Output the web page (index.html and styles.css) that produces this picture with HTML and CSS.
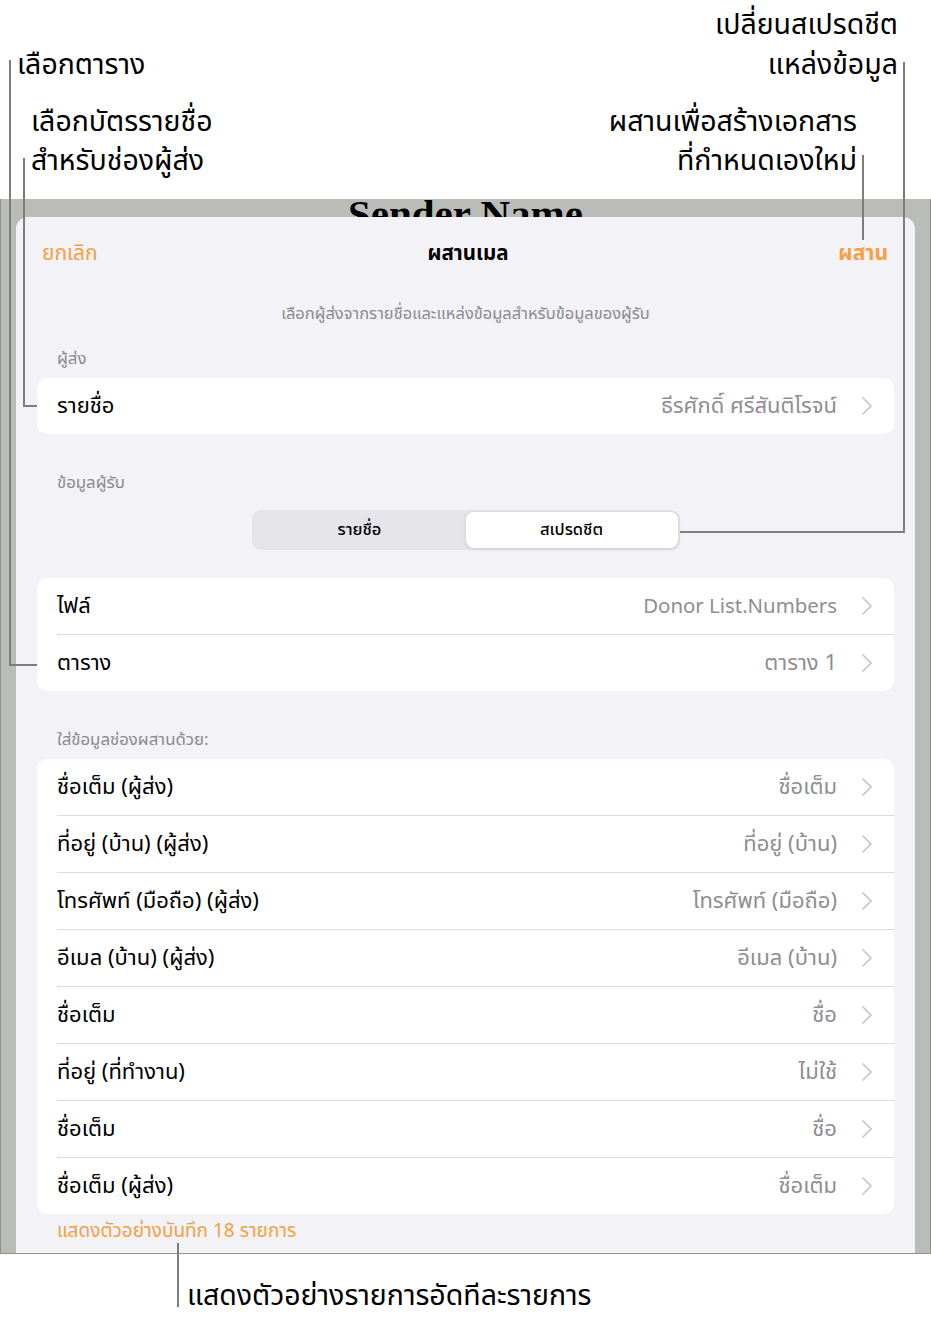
FILE: index.html
```html
<!DOCTYPE html>
<html lang="th">
<head>
  <meta charset="UTF-8">
  <meta name="viewport" content="width=device-width, initial-scale=1">
  <title>ผสานเมล</title>
  <link rel="stylesheet" href="styles.css">
</head>
<body>
  <div class="page">
    <!-- คำอธิบายด้านบน -->
    <div class="top-notes">
      <div class="notes-left">
        <div class="note note-table">เลือกตาราง</div>
        <div class="note note-card">เลือกบัตรรายชื่อ<br>สำหรับช่องผู้ส่ง</div>
      </div>
      <div class="notes-right">
        <div class="note note-source">เปลี่ยนสเปรดชีต<br>แหล่งข้อมูล</div>
        <div class="note note-merge">ผสานเพื่อสร้างเอกสาร<br>ที่กำหนดเองใหม่</div>
      </div>
    </div>

    <div class="frame">
      <div class="peek">Sender Name</div>
      <div class="sheet">
        <div class="nav">
          <span class="nav-btn">ยกเลิก</span>
          <span class="nav-title">ผสานเมล</span>
          <span class="nav-btn nav-done">ผสาน</span>
        </div>
        <p class="desc">เลือกผู้ส่งจากรายชื่อและแหล่งข้อมูลสำหรับข้อมูลของผู้รับ</p>

        <div class="sec-head">ผู้ส่ง</div>
        <div class="card">
          <div class="row"><span class="row-label">รายชื่อ</span><span class="row-value">ธีรศักดิ์ ศรีสันติโรจน์</span><svg class="chev" viewBox="0 0 12 20"><path d="M1.5 1.5 L10 10 L1.5 18.5"/></svg></div>
        </div>

        <div class="sec-head sec-gap">ข้อมูลผู้รับ</div>
        <div class="seg">
          <div class="seg-item">รายชื่อ</div>
          <div class="seg-item seg-on">สเปรดชีต</div>
        </div>

        <div class="card card-mid">
          <div class="row"><span class="row-label">ไฟล์</span><span class="row-value latin">Donor List.Numbers</span><svg class="chev" viewBox="0 0 12 20"><path d="M1.5 1.5 L10 10 L1.5 18.5"/></svg></div>
          <div class="row"><span class="row-label">ตาราง</span><span class="row-value">ตาราง 1</span><svg class="chev" viewBox="0 0 12 20"><path d="M1.5 1.5 L10 10 L1.5 18.5"/></svg></div>
        </div>

        <div class="sec-head sec-gap">ใส่ข้อมูลช่องผสานด้วย:</div>
        <div class="card">
          <div class="row"><span class="row-label">ชื่อเต็ม (ผู้ส่ง)</span><span class="row-value">ชื่อเต็ม</span><svg class="chev" viewBox="0 0 12 20"><path d="M1.5 1.5 L10 10 L1.5 18.5"/></svg></div>
          <div class="row"><span class="row-label">ที่อยู่ (บ้าน) (ผู้ส่ง)</span><span class="row-value">ที่อยู่ (บ้าน)</span><svg class="chev" viewBox="0 0 12 20"><path d="M1.5 1.5 L10 10 L1.5 18.5"/></svg></div>
          <div class="row"><span class="row-label">โทรศัพท์ (มือถือ) (ผู้ส่ง)</span><span class="row-value">โทรศัพท์ (มือถือ)</span><svg class="chev" viewBox="0 0 12 20"><path d="M1.5 1.5 L10 10 L1.5 18.5"/></svg></div>
          <div class="row"><span class="row-label">อีเมล (บ้าน) (ผู้ส่ง)</span><span class="row-value">อีเมล (บ้าน)</span><svg class="chev" viewBox="0 0 12 20"><path d="M1.5 1.5 L10 10 L1.5 18.5"/></svg></div>
          <div class="row"><span class="row-label">ชื่อเต็ม</span><span class="row-value">ชื่อ</span><svg class="chev" viewBox="0 0 12 20"><path d="M1.5 1.5 L10 10 L1.5 18.5"/></svg></div>
          <div class="row"><span class="row-label">ที่อยู่ (ที่ทำงาน)</span><span class="row-value">ไม่ใช้</span><svg class="chev" viewBox="0 0 12 20"><path d="M1.5 1.5 L10 10 L1.5 18.5"/></svg></div>
          <div class="row"><span class="row-label">ชื่อเต็ม</span><span class="row-value">ชื่อ</span><svg class="chev" viewBox="0 0 12 20"><path d="M1.5 1.5 L10 10 L1.5 18.5"/></svg></div>
          <div class="row"><span class="row-label">ชื่อเต็ม (ผู้ส่ง)</span><span class="row-value">ชื่อเต็ม</span><svg class="chev" viewBox="0 0 12 20"><path d="M1.5 1.5 L10 10 L1.5 18.5"/></svg></div>
        </div>

        <div class="preview-link">แสดงตัวอย่างบันทึก 18 รายการ</div>
      </div>
    </div>

    <div class="note note-bottom">แสดงตัวอย่างรายการอัดทีละรายการ</div>

    <!-- เส้นชี้ -->
    <div class="leader leader-table"></div>
    <div class="leader leader-card"></div>
    <div class="leader leader-source"></div>
    <div class="leader leader-merge"></div>
    <div class="leader leader-bottom"></div>
  </div>
</body>
</html>
```

FILE: styles.css
```css
html, body {
  margin: 0; padding: 0;
  background: #fff;
  font-family: "Noto Sans Thai", "Noto Sans", "Liberation Sans", sans-serif;
  color: #000;
}
.page { position: relative; width: 931px; height: 1319px; overflow: hidden; }

/* คำอธิบาย */
.top-notes { height: 199px; display: flex; justify-content: space-between; }
.note { font-size: 28.5px; line-height: 40px; white-space: nowrap; }
.notes-left { padding-left: 17px; }
.note-table { margin-top: 46px; }
.note-card { margin-top: 17px; padding-left: 14px; line-height: 39px; }
.notes-right { padding-right: 33px; text-align: right; }
.note-source { margin-top: 6px; }
.note-merge { margin-top: 17px; margin-right: 41px; line-height: 39px; }
.note-bottom { padding-left: 187px; margin-top: 23px; }

/* กรอบภาพหน้าจอ */
.frame {
  height: 1054px;
  background: #babcb7;
  border: 1px solid #8e908c; border-top: none;
  overflow: hidden;
}
.peek {
  margin-top: -5px; height: 23px;
  font: bold 41px/41px "Liberation Serif", serif;
  text-align: center; white-space: nowrap;
}
.sheet {
  position: relative; z-index: 1;
  margin: 0 15px 0 15px;
  background: #f2f2f7;
  border-radius: 12px 12px 0 0;
  padding-bottom: 40px;
}
.nav { height: 72px; display: flex; align-items: center; justify-content: space-between; padding: 0 27px 0 26px; font-size: 21px; }
.nav-btn { color: #f4a043; }
.nav-done { font-weight: 700; }
.nav-title { font-weight: 700; font-size: 20.5px; }
.desc { margin: 15px 0 0 0; text-align: center; font-size: 16.5px; line-height: 20px; color: #8a8a8e; }
.sec-head { margin: 25px 0 9px 0; padding-left: 41px; font-size: 16.8px; line-height: 20px; color: #8a8a8e; }
.sec-gap { margin-top: 39px; }

.card { margin: 0 21px; background: #fff; border-radius: 10px; overflow: hidden; }
.card-mid { margin-top: 28px; }
.row {
  height: 56px; display: flex; align-items: center;
  padding: 0 21px 0 20px; font-size: 22px;
}
.row + .row { border-top: 1px solid #d9d9dd; margin-left: 20px; padding-left: 0; }
.row-label { flex: 1; white-space: nowrap; }
.row-value { color: #8e8e93; white-space: nowrap; margin-right: 24px; }
.row-value.latin { font-size: 20.4px; }
.chev { width: 12px; height: 20px; fill: none; stroke: #c4c4c8; stroke-width: 1.6; }

.seg {
  margin: 17px auto 0 auto; width: 424px; padding: 2px;
  display: flex; background: #e4e4e9; border-radius: 9px;
}
.seg-item { flex: 1; height: 36px; line-height: 36px; text-align: center; font-size: 16.5px; font-weight: 500; }
.seg-on { background: #fff; border-radius: 8px; box-shadow: 0 1px 4px rgba(0,0,0,0.12); }

.preview-link { margin: 8px 0 0 41px; font-size: 19px; line-height: 20px; color: #f4a043; }

/* เส้นชี้ */
.leader { position: absolute; border: 0 solid #7d7d7d; z-index: 5; }
.leader-table { left: 9px; top: 60px; width: 26px; height: 604px; border-left-width: 2px; border-bottom-width: 2px; }
.leader-card { left: 23px; top: 158px; width: 12px; height: 247px; border-left-width: 2px; border-bottom-width: 2px; }
.leader-source { left: 680px; top: 62px; width: 223px; height: 469px; border-right-width: 2px; border-bottom-width: 2px; }
.leader-merge { left: 862px; top: 155px; height: 85px; border-left-width: 2px; }
.leader-bottom { left: 177px; top: 1243px; height: 64px; border-left-width: 2px; }
```
